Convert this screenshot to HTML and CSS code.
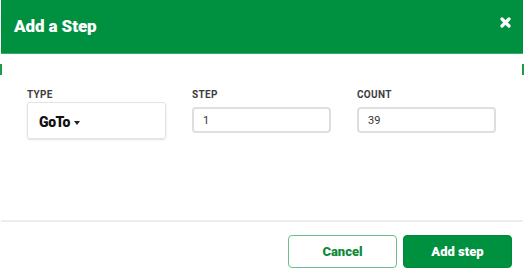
FILE: index.html
```html
<!DOCTYPE html>
<html>
<head>
<meta charset="utf-8">
<link rel="stylesheet" href="styles.css">
</head>
<body>
<div class="side-mark left"></div>
<div class="side-mark right"></div>
<div class="modal">
  <header class="modal-header">
    <h1 class="title">Add a Step</h1>
    <button class="close" aria-label="Close">
      <svg width="11" height="11" viewBox="0 0 11 11"><path d="M2 2 L9 9 M9 2 L2 9" stroke="#fff" stroke-width="3.2" stroke-linecap="round"/></svg>
    </button>
  </header>
  <div class="modal-body">
    <div class="field type-field">
      <label class="label">TYPE</label>
      <div class="dropdown"><span class="dd-text">GoTo</span><span class="caret"></span></div>
    </div>
    <div class="field">
      <label class="label">STEP</label>
      <input class="input" value="1">
    </div>
    <div class="field">
      <label class="label">COUNT</label>
      <input class="input" value="39">
    </div>
  </div>
  <footer class="modal-footer">
    <button class="btn btn-outline">Cancel</button>
    <button class="btn btn-primary">Add step</button>
  </footer>
</div>
</body>
</html>
```
FILE: styles.css
```css
* { box-sizing: border-box; }
html, body { margin: 0; padding: 0; background: #fff; }
body { font-family: Roboto, "Liberation Sans", sans-serif; width: 524px; height: 279px; overflow: hidden; position: relative; }
.modal { margin-left: 1px; width: 522px; }
.modal-header { height: 54px; background: #009140; border-bottom: 1px solid #3aa866; display: flex; align-items: center; justify-content: space-between; padding: 0 12px 0 13px; }
.title { margin: 0 0 2px; color: #fff; font-size: 17px; font-weight: 900; letter-spacing: -0.1px; }
.close { background: none; border: 0; padding: 0; width: 11px; height: 11px; display: flex; margin-top: -9px; }
.side-mark { position: absolute; top: 64px; width: 2px; height: 11px; background: #1f9a4d; }
.side-mark.left { left: 0; }
.side-mark.right { left: 522px; }
.modal-body { height: 168px; display: flex; gap: 26px; padding: 34px 0 0 26px; border-bottom: 2px solid #eceeee; }
.field { display: flex; flex-direction: column; }
.label { font-size: 10px; font-weight: 700; color: #3d3d3d; letter-spacing: 0.3px; height: 14px; line-height: 14px; margin-bottom: 0; }
.dropdown { width: 139px; height: 37px; border: 1px solid #e3e3e3; border-radius: 3px; box-shadow: 0 1px 2px rgba(0,0,0,0.12); display: flex; align-items: center; padding: 3px 0 0 11px; }
.dd-text { font-size: 14px; font-weight: 900; color: #111; letter-spacing: -0.4px; }
.caret { width: 0; height: 0; border-left: 3.5px solid transparent; border-right: 3.5px solid transparent; border-top: 4px solid #222; margin-left: 4px; margin-top: 2px; }
.input { width: 139px; height: 26px; margin-top: 5px; border: 2px solid #dedede; border-radius: 4px; font-family: inherit; font-size: 11px; color: #333; padding: 0 9px; outline: none; }
.modal-footer { display: flex; justify-content: flex-end; gap: 6px; padding: 13px 11px 0 0; }
.btn { width: 109px; height: 33px; border-radius: 4px; font-family: inherit; font-size: 13px; font-weight: 900; cursor: pointer; }
.btn-outline { background: #fff; border: 1.5px solid #6cbf8c; color: #0f8a3c; }
.btn-primary { background: #009140; border: 1px solid #008a3b; color: #fff; }
```
